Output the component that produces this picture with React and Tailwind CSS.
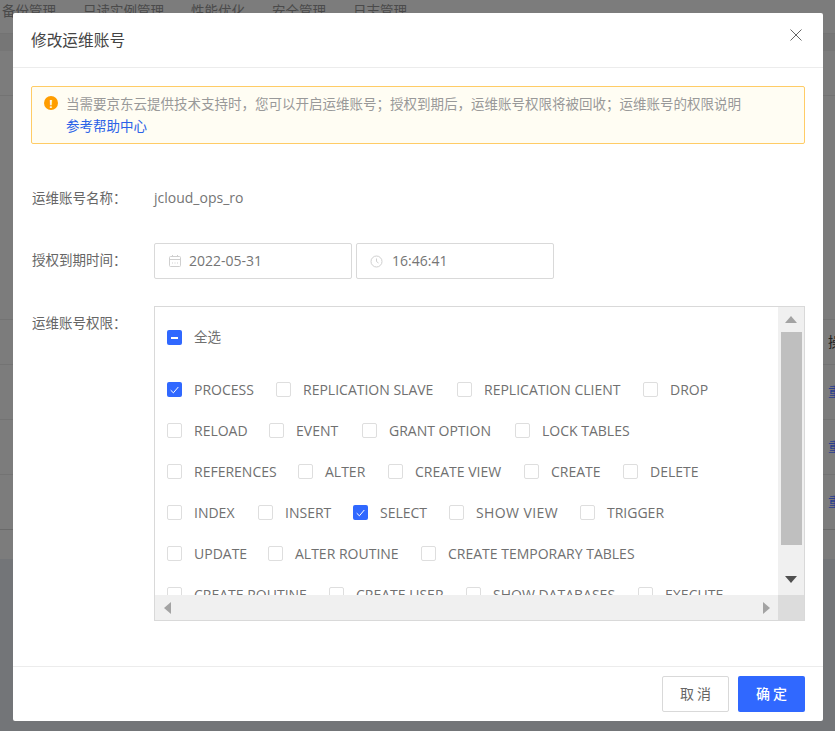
import React from "react";

// name, checked, label width (keeps the boxes on the same columns as the design)
const rows = [
  [["PROCESS", true, "w-[60px]"], ["REPLICATION SLAVE", false, "w-[132px]"], ["REPLICATION CLIENT", false, "w-[137px]"], ["DROP"]],
  [["RELOAD", false, "w-[53px]"], ["EVENT", false, "w-[44px]"], ["GRANT OPTION", false, "w-[104px]"], ["LOCK TABLES"]],
  [["REFERENCES", false, "w-[82px]"], ["ALTER", false, "w-[41px]"], ["CREATE VIEW", false, "w-[87px]"], ["CREATE", false, "w-[50px]"], ["DELETE"]],
  [["INDEX", false, "w-[42px]"], ["INSERT", false, "w-[46px]"], ["SELECT", true, "w-[47px]"], ["SHOW VIEW", false, "w-[82px] tracking-[0.4px]"], ["TRIGGER"]],
  [["UPDATE", false, "w-[52px]"], ["ALTER ROUTINE", false, "w-[104px]"], ["CREATE TEMPORARY TABLES"]],
  [["CREATE ROUTINE", false, "w-[113px]"], ["CREATE USER", false, "w-[88px]"], ["SHOW DATABASES", false, "w-[123px]"], ["EXECUTE"]],
];

const Check = ({ label, checked, partial, width, textClass = "text-sm" }) => (
  <label className={`flex items-center gap-3 leading-[15px] whitespace-nowrap text-[#707070] ${textClass}`}>
    {checked || partial ? (
      <span className="flex h-[15px] w-[15px] items-center justify-center rounded-[2px] bg-[#3068ff]">
        {checked ? (
          <svg width="9" height="8" viewBox="0 0 9 8" fill="none" stroke="#fff" strokeWidth="1">
            <path d="M.7 4.2 3.4 6.8 8.3 1" />
          </svg>
        ) : (
          <span className="h-[2px] w-[7px] bg-white" />
        )}
      </span>
    ) : (
      <span className="h-[15px] w-[15px] rounded-[2px] border border-[#dedede] bg-white" />
    )}
    <span className={width}>{label}</span>
  </label>
);

export default function App() {
  return (
    <div className="relative h-[731px] w-[835px] overflow-hidden bg-[#7c7c7c] font-['Open_Sans','Noto_Sans_CJK_SC',sans-serif]">
      {/* page behind the mask */}
      <div className="flex h-[34px] gap-[27px] border-b border-[#737373] pl-[2px] text-[13.5px] leading-[22px] text-[#4a4a4a]">
        <span>备份管理</span>
        <span>只读实例管理</span>
        <span>性能优化</span>
        <span>安全管理</span>
        <span>日志管理</span>
      </div>
      <div className="h-[17px] bg-[#767676]" />
      <div className="h-[45px] border-b border-[#737373]" />
      <div className="h-[224px] border-b border-[#737373]" />
      <div className="flex h-[45px] items-center whitespace-nowrap border-b border-[#737373] pl-[828px] text-sm text-[#222]">操作</div>
      <div className="flex h-[55px] items-center whitespace-nowrap border-b border-[#737373] pl-[828px] text-sm text-[#2a3f90]">重置</div>
      <div className="flex h-[55px] items-center whitespace-nowrap border-b border-[#737373] pl-[828px] text-sm text-[#2a3f90]">重置</div>
      <div className="flex h-[55px] items-center whitespace-nowrap border-b border-[#6a6a6a] pl-[828px] text-sm text-[#2a3f90]">重置</div>
      <div className="h-[29px]" />
      <div className="h-[172px] bg-[#737578]" />

      {/* dialog */}
      <div className="absolute left-[13px] top-[13px] flex h-[708px] w-[810px] flex-col rounded-[2px] bg-white">
        <div className="flex h-[55px] shrink-0 items-center justify-between border-b border-[#ececec] pl-[18px] pr-[21px]">
          <span className="pt-[1px] text-[15.7px] text-[#444]">修改运维账号</span>
          <svg width="12" height="12" viewBox="0 0 12 12" stroke="#666" strokeWidth="1" className="-mt-[10px]">
            <path d="M.5.5l11 11M11.5.5l-11 11" />
          </svg>
        </div>

        <div className="flex flex-1 flex-col px-[18px] pt-[18px]">
          <div className="flex h-[58px] gap-[8px] rounded-[2px] border border-[#ffcc66] bg-[#fffdf3] pl-[12px] pr-3 pt-[6px] text-[13.5px] leading-[22px]">
            <span className="mt-[3px] flex h-[14px] w-[14px] shrink-0 items-center justify-center rounded-full bg-[#ff9d00] text-[11px] font-bold leading-none text-white">!</span>
            <div className="text-[#999]">
              <div>当需要京东云提供技术支持时，您可以开启运维账号；授权到期后，运维账号权限将被回收；运维账号的权限说明</div>
              <div className="text-[#2a62e8]">参考帮助中心</div>
            </div>
          </div>

          <div className="mt-[44px] flex items-center text-sm leading-[20px]">
            <span className="w-[123px] pl-[1px] text-[13.5px] text-[#666]">运维账号名称：</span>
            <span className="text-[#757575]">jcloud_ops_ro</span>
          </div>

          <div className="mt-[35px] flex items-center text-sm">
            <span className="-mt-[1px] w-[123px] pl-[1px] text-[13.5px] text-[#666]">授权到期时间：</span>
            <div className="flex gap-1">
              <div className="flex h-[36px] w-[198px] items-center gap-[7px] rounded-[2px] border border-[#d9d9d9] pl-[13px] text-[#757575]">
                <svg width="14" height="14" viewBox="0 0 14 14" fill="none" stroke="#cfcfcf">
                  <rect x="1.5" y="2.5" width="11" height="10" rx="1" />
                  <path d="M1.5 5.5h11M4.5 1v2M9.5 1v2M4 9h1M6.5 9h1M9 9h1" />
                </svg>
                2022-05-31
              </div>
              <div className="flex h-[36px] w-[198px] items-center gap-[9px] rounded-[2px] border border-[#d9d9d9] pl-[13px] text-[#757575]">
                <svg width="13" height="13" viewBox="0 0 13 13" fill="none" stroke="#cfcfcf">
                  <circle cx="6.5" cy="6.5" r="5.5" />
                  <path d="M6.5 3.5v3l2 1.5" />
                </svg>
                16:46:41
              </div>
            </div>
          </div>

          <div className="mt-[27px] flex">
            <span className="w-[123px] pl-[1px] pt-[7px] text-[13.5px] leading-[20px] text-[#666]">运维账号权限：</span>
            <div className="relative h-[315px] w-[651px] overflow-hidden border border-[#d9d9d9]">
              <div className="pl-[12px] pt-[23px]">
                <Check label="全选" partial textClass="text-[13.5px]" />
                <div className="mt-[37px] flex flex-col gap-[26px]">
                  {rows.map((row, i) => (
                    <div key={i} className="flex gap-[22px]">
                      {row.map(([name, on, width]) => (
                        <Check key={name} label={name} checked={on} width={width} />
                      ))}
                    </div>
                  ))}
                </div>
              </div>

              {/* scrollbars */}
              <div className="absolute bottom-0 right-0 top-0 flex w-[26px] flex-col items-center bg-[#f0f0f0] pb-[26px]">
                <svg width="12" height="7" viewBox="0 0 12 7" fill="#a3a3a3" className="mt-[9px] shrink-0"><path d="M6 0l6 7H0z" /></svg>
                <div className="mt-[9px] h-[213px] w-[21px] shrink-0 bg-[#bfbfbf]" />
                <svg width="12" height="7" viewBox="0 0 12 7" fill="#505050" className="mt-[31px] shrink-0"><path d="M6 7l6-7H0z" /></svg>
              </div>
              <div className="absolute bottom-0 left-0 right-0 flex h-[25px] items-center justify-between bg-[#f0f0f0] pl-[9px] pr-[34px]">
                <svg width="7" height="12" viewBox="0 0 7 12" fill="#a3a3a3"><path d="M0 6l7 6V0z" /></svg>
                <svg width="7" height="12" viewBox="0 0 7 12" fill="#a3a3a3"><path d="M7 6l-7 6V0z" /></svg>
              </div>
              <div className="absolute bottom-0 right-0 h-[25px] w-[26px] bg-[#dcdcdc]" />
            </div>
          </div>
        </div>

        <div className="flex h-[55px] shrink-0 items-center justify-end gap-[9px] border-t border-[#ececec] pr-[18px]">
          <button className="h-[36px] w-[67px] rounded-[2px] border border-[#d9d9d9] bg-white pl-[3px] text-sm tracking-[3px] text-[#666]">取消</button>
          <button className="h-[36px] w-[67px] rounded-[2px] bg-[#3068ff] pl-[3px] text-sm font-medium tracking-[3px] text-white">确定</button>
        </div>
      </div>
    </div>
  );
}
